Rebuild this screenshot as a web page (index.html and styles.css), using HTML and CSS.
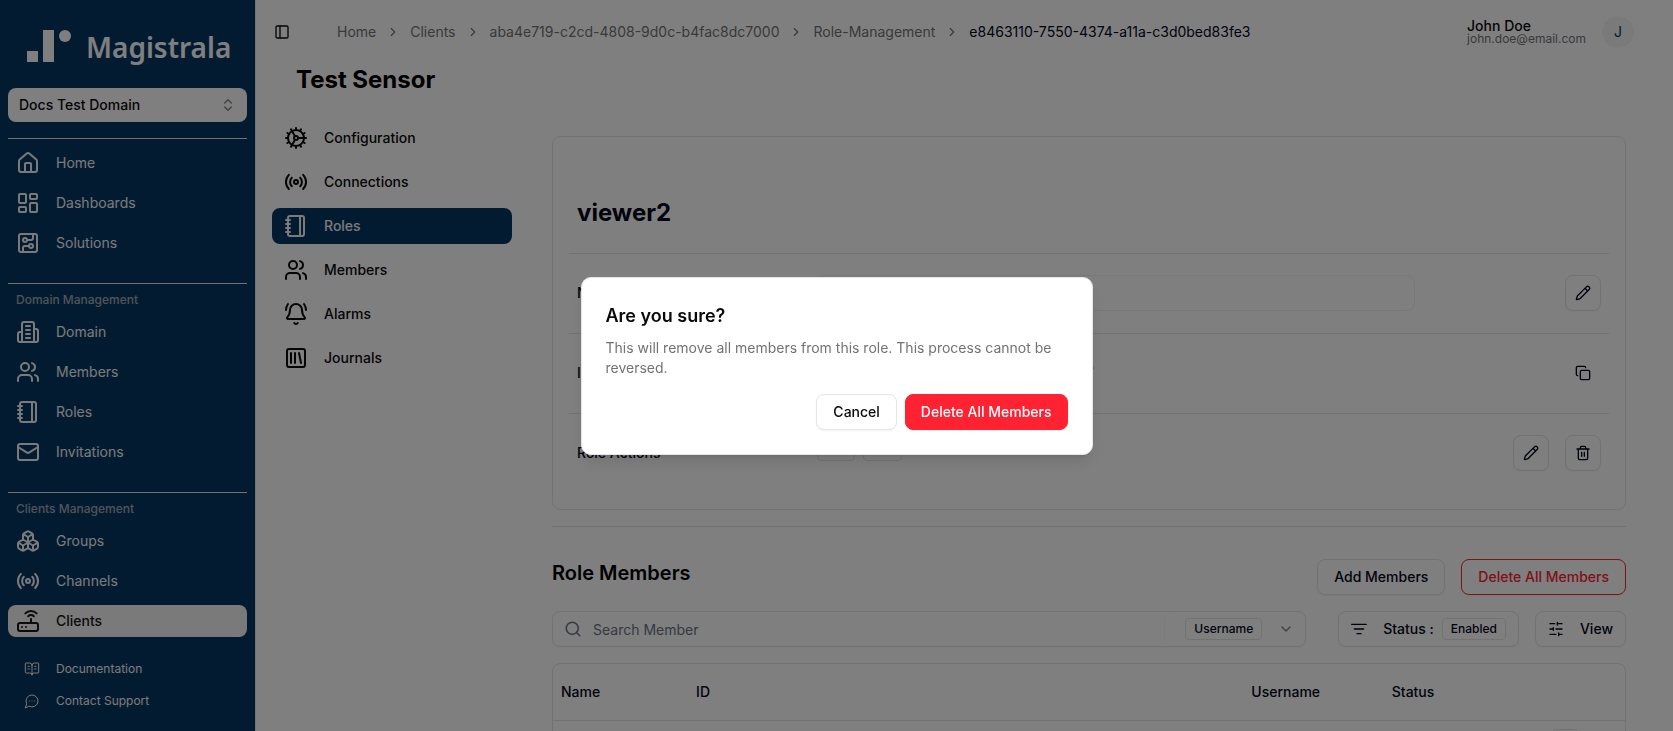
FILE: index.html
```html
<!DOCTYPE html>
<html lang="en">
<head>
    <meta charset="UTF-8">
    <meta name="viewport" content="width=device-width, initial-scale=1.0">
    <title>Role Management</title>
    <link rel="stylesheet" href="styles.css">
</head>
<body>
    <!-- shared icons -->
    <svg class="sprite" aria-hidden="true">
        <symbol id="users" viewBox="0 0 24 24"><path d="M16 21v-2a4 4 0 0 0-4-4H6a4 4 0 0 0-4 4v2"/><circle cx="9" cy="7" r="4"/><path d="M22 21v-2a4 4 0 0 0-3-3.87M16 3.13a4 4 0 0 1 0 7.75"/></symbol>
        <symbol id="notebook" viewBox="0 0 24 24"><path d="M2 6h4M2 10h4M2 14h4M2 18h4"/><rect width="16" height="20" x="4" y="2" rx="2"/><path d="M16 2v20"/></symbol>
        <symbol id="radio" viewBox="0 0 24 24"><path d="M4.9 19.1C1 15.2 1 8.8 4.9 4.9M7.8 16.2c-2.3-2.3-2.3-6.1 0-8.5"/><circle cx="12" cy="12" r="2"/><path d="M16.2 7.8c2.3 2.3 2.3 6.1 0 8.5M19.1 4.9C23 8.8 23 15.1 19.1 19"/></symbol>
        <symbol id="chevron" viewBox="0 0 24 24"><path d="m9 18 6-6-6-6"/></symbol>
        <symbol id="pencil" viewBox="0 0 24 24"><path d="M21.17 6.81a1 1 0 0 0-3.98-3.98L3.84 16.17a2 2 0 0 0-.5.83l-1.32 4.35a.5.5 0 0 0 .62.62l4.35-1.32a2 2 0 0 0 .83-.5zM15 5l4 4"/></symbol>
    </svg>

    <div class="layout">
        <aside class="sidebar">
            <a href="#" class="logo" aria-label="Magistrala">
                <svg class="logo-mark" viewBox="0 0 44 32"><path d="M0 21h11v11H0zM16 0h11v32H16z"/><circle cx="38" cy="6" r="6"/></svg>
                <span>Magistrala</span>
            </a>
            <button type="button" class="domain-switch">
                Docs Test Domain
                <svg class="icon small" viewBox="0 0 24 24"><path d="m7 15 5 5 5-5M7 9l5-5 5 5"/></svg>
            </button>
            <nav class="side-group">
                <a href="#"><svg class="icon" viewBox="0 0 24 24"><path d="M15 21v-8a1 1 0 0 0-1-1h-4a1 1 0 0 0-1 1v8"/><path d="M3 10a2 2 0 0 1 .71-1.53l7-6a2 2 0 0 1 2.58 0l7 6A2 2 0 0 1 21 10v9a2 2 0 0 1-2 2H5a2 2 0 0 1-2-2z"/></svg>Home</a>
                <a href="#"><svg class="icon" viewBox="0 0 24 24"><rect width="7" height="9" x="3" y="3" rx="1"/><rect width="7" height="5" x="14" y="3" rx="1"/><rect width="7" height="9" x="14" y="12" rx="1"/><rect width="7" height="5" x="3" y="16" rx="1"/></svg>Dashboards</a>
                <a href="#"><svg class="icon" viewBox="0 0 24 24"><rect width="18" height="18" x="3" y="3" rx="2"/><path d="M11 9h4a2 2 0 0 0 2-2V3"/><circle cx="9" cy="9" r="2"/><path d="M7 21v-4a2 2 0 0 1 2-2h4"/><circle cx="15" cy="15" r="2"/></svg>Solutions</a>
            </nav>
            <nav class="side-group">
                <h2>Domain Management</h2>
                <a href="#"><svg class="icon" viewBox="0 0 24 24"><path d="M6 22V4a2 2 0 0 1 2-2h8a2 2 0 0 1 2 2v18zM6 12H4a2 2 0 0 0-2 2v6a2 2 0 0 0 2 2h2M18 9h2a2 2 0 0 1 2 2v9a2 2 0 0 1-2 2h-2M10 6h4M10 10h4M10 14h4M10 18h4"/></svg>Domain</a>
                <a href="#"><svg class="icon"><use href="#users"/></svg>Members</a>
                <a href="#"><svg class="icon"><use href="#notebook"/></svg>Roles</a>
                <a href="#"><svg class="icon" viewBox="0 0 24 24"><rect width="20" height="16" x="2" y="4" rx="2"/><path d="m22 7-8.97 5.7a1.94 1.94 0 0 1-2.06 0L2 7"/></svg>Invitations</a>
            </nav>
            <nav class="side-group last">
                <h2>Clients Management</h2>
                <a href="#"><svg class="icon" viewBox="0 0 24 24"><path d="M2.97 12.92A2 2 0 0 0 2 14.63v3.24a2 2 0 0 0 .97 1.71l3 1.8a2 2 0 0 0 2.06 0L12 19v-5.5l-5-3zM7 16.5l-4.74-2.85M7 16.5l5-3M7 16.5v5.17M12 13.5V19l3.97 2.38a2 2 0 0 0 2.06 0l3-1.8a2 2 0 0 0 .97-1.71v-3.24a2 2 0 0 0-.97-1.71L17 10.5zM17 16.5l-5-3M17 16.5l4.74-2.85M17 16.5v5.17M7.97 4.42A2 2 0 0 0 7 6.13v4.37l5 3 5-3V6.13a2 2 0 0 0-.97-1.71l-3-1.8a2 2 0 0 0-2.06 0zM12 8 7.26 5.15M12 8l4.74-2.85M12 13.5V8"/></svg>Groups</a>
                <a href="#"><svg class="icon"><use href="#radio"/></svg>Channels</a>
                <a href="#" class="active" aria-current="page"><svg class="icon" viewBox="0 0 24 24"><rect width="20" height="8" x="2" y="14" rx="2"/><path d="M6.01 18H6M10.01 18H10M15 10v4M17.84 7.17a4 4 0 0 0-5.66 0M20.66 4.34a8 8 0 0 0-11.31 0"/></svg>Clients</a>
            </nav>
            <nav class="side-help">
                <a href="#"><svg class="icon small" viewBox="0 0 24 24"><path d="M12 7v14M16 12h2M16 8h2M6 12h2M6 8h2M3 18a1 1 0 0 1-1-1V4a1 1 0 0 1 1-1h5a4 4 0 0 1 4 4 4 4 0 0 1 4-4h5a1 1 0 0 1 1 1v13a1 1 0 0 1-1 1h-6a3 3 0 0 0-3 3 3 3 0 0 0-3-3z"/></svg>Documentation</a>
                <a href="#"><svg class="icon small" viewBox="0 0 24 24"><path d="M7.9 20A9 9 0 1 0 4 16.1L2 22ZM8 12h.01M12 12h.01M16 12h.01"/></svg>Contact Support</a>
            </nav>
        </aside>

        <main class="main">
            <header class="topbar">
                <button type="button" class="toggle" aria-label="Toggle sidebar"><svg class="icon small" viewBox="0 0 24 24"><rect width="18" height="18" x="3" y="3" rx="2"/><path d="M9 3v18"/></svg></button>
                <nav class="breadcrumb" aria-label="Breadcrumb">
                    <a href="#">Home</a>
                    <svg class="icon tiny"><use href="#chevron"/></svg>
                    <a href="#">Clients</a>
                    <svg class="icon tiny"><use href="#chevron"/></svg>
                    <a href="#">aba4e719-c2cd-4808-9d0c-b4fac8dc7000</a>
                    <svg class="icon tiny"><use href="#chevron"/></svg>
                    <a href="#">Role-Management</a>
                    <svg class="icon tiny"><use href="#chevron"/></svg>
                    <span class="current">e8463110-7550-4374-a11a-c3d0bed83fe3</span>
                </nav>
                <div class="user">
                    <div class="user-text">
                        <strong>John Doe</strong>
                        <span>john.doe@email.com</span>
                    </div>
                    <button type="button" class="avatar">J</button>
                </div>
            </header>

            <h1>Test Sensor</h1>

            <div class="columns">
                <nav class="tabs">
                    <a href="#"><svg class="icon" viewBox="0 0 24 24"><path d="M12 20a8 8 0 1 0 0-16 8 8 0 0 0 0 16Z"/><path d="M12 14a2 2 0 1 0 0-4 2 2 0 0 0 0 4ZM12 2v2M12 22v-2M17 20.66l-1-1.73M11 10.27 7 3.34M20.66 17l-1.73-1M3.34 7l1.73 1M14 12h8M2 12h2M20.66 7l-1.73 1M3.34 17l1.73-1M17 3.34l-1 1.73M11 13.73l-4 6.93"/></svg>Configuration</a>
                    <a href="#"><svg class="icon"><use href="#radio"/></svg>Connections</a>
                    <a href="#" class="active" aria-current="page"><svg class="icon"><use href="#notebook"/></svg>Roles</a>
                    <a href="#"><svg class="icon"><use href="#users"/></svg>Members</a>
                    <a href="#"><svg class="icon" viewBox="0 0 24 24"><path d="M10.27 21a2 2 0 0 0 3.46 0M22 8c0-2.3-.8-4.3-2-6M3.26 15.33A1 1 0 0 0 4 17h16a1 1 0 0 0 .74-1.67C19.41 13.96 18 12.5 18 8A6 6 0 0 0 6 8c0 4.5-1.41 5.96-2.74 7.33M4 2C2.8 3.7 2 5.7 2 8"/></svg>Alarms</a>
                    <a href="#"><svg class="icon" viewBox="0 0 24 24"><rect width="18" height="18" x="3" y="3" rx="2"/><path d="M7 7v10M11 7v10M15 7l2 10"/></svg>Journals</a>
                </nav>

                <div class="content">
                    <section class="card">
                        <h2>viewer2</h2>
                        <div class="row">
                            <label for="roleName">Name</label>
                            <input type="text" id="roleName" value="viewer2" disabled>
                            <div class="row-actions">
                                <button type="button" class="btn square" aria-label="Edit name"><svg class="icon small"><use href="#pencil"/></svg></button>
                            </div>
                        </div>
                        <div class="row">
                            <span>ID</span>
                            <span class="role-id">e8463110-7550-4374-a11a-c3d0bed83fe3</span>
                            <div class="row-actions">
                                <button type="button" class="btn square ghost" aria-label="Copy ID"><svg class="icon small" viewBox="0 0 24 24"><rect width="14" height="14" x="8" y="8" rx="2"/><path d="M4 16c-1.1 0-2-.9-2-2V4c0-1.100.9-2 2-2h10c1.100 0 2 .9 2 2"/></svg></button>
                            </div>
                        </div>
                        <div class="row">
                            <span>Role Actions</span>
                            <div class="actions-list"><span class="tag">read</span><span class="tag">view</span></div>
                            <div class="row-actions">
                                <button type="button" class="btn square" aria-label="Edit actions"><svg class="icon small"><use href="#pencil"/></svg></button>
                                <button type="button" class="btn square" aria-label="Delete actions"><svg class="icon small" viewBox="0 0 24 24"><path d="M3 6h18M19 6v14c0 1-1 2-2 2H7c-1 0-2-1-2-2V6M8 6V4c0-1 1-2 2-2h4c1 0 2 1 2 2v2M10 11v6M14 11v6"/></svg></button>
                            </div>
                        </div>
                    </section>

                    <section class="members">
                        <div class="members-head">
                            <h2>Role Members</h2>
                            <button type="button" class="btn">Add Members</button>
                            <button type="button" class="btn danger-outline">Delete All Members</button>
                        </div>
                        <div class="filters">
                            <div class="search">
                                <svg class="icon search-icon" viewBox="0 0 24 24"><circle cx="11" cy="11" r="8"/><path d="m21 21-4.3-4.3"/></svg>
                                <input type="search" placeholder="Search Member" aria-label="Search Member">
                                <button type="button" class="search-by"><span class="tag">Username</span><svg class="icon small" viewBox="0 0 24 24"><path d="m6 9 6 6 6-6"/></svg></button>
                            </div>
                            <button type="button" class="btn status"><svg class="icon small" viewBox="0 0 24 24"><path d="M1 5h22M5 12h14M9 19h6"/></svg><span>Status :</span><span class="tag">Enabled</span></button>
                            <button type="button" class="btn view"><svg class="icon small" viewBox="0 0 24 24"><path d="M21 4h-7M10 4H3M21 12h-9M8 12H3M21 20h-5M12 20H3M14 2v4M8 10v4M16 18v4"/></svg>View</button>
                        </div>
                        <div class="table-box">
                            <table>
                                <thead>
                                    <tr><th class="col-name">Name</th><th class="col-id">ID</th><th class="col-user">Username</th><th class="col-status">Status</th><th></th></tr>
                                </thead>
                                <tbody>
                                    <tr><td></td><td></td><td></td><td></td><td class="cell-menu"><button type="button" class="row-menu" aria-label="Row menu"></button></td></tr>
                                </tbody>
                            </table>
                        </div>
                    </section>
                </div>
            </div>
        </main>
    </div>

    <div class="overlay">
        <div class="dialog" role="alertdialog" aria-labelledby="dialogTitle" aria-describedby="dialogText">
            <h2 id="dialogTitle">Are you sure?</h2>
            <p id="dialogText">This will remove all members from this role. This process cannot be reversed.</p>
            <div class="dialog-buttons">
                <button type="button" class="btn">Cancel</button>
                <button type="button" class="btn danger">Delete All Members</button>
            </div>
        </div>
    </div>
</body>
</html>
```
FILE: styles.css
```css
* {
    box-sizing: border-box;
}
body {
    margin: 0;
    height: 100vh;
    overflow: hidden;
    font-family: Inter, sans-serif;
    font-size: 14px;
    line-height: 20px;
    color: #0a0a0a;
    background: #fff;
}
h1, h2, p {
    margin: 0;
}
a {
    color: inherit;
    text-decoration: none;
}
button, input {
    font: inherit;
    color: inherit;
}
button {
    cursor: pointer;
}
.sprite {
    display: none;
}
.icon {
    width: 24px;
    height: 24px;
    flex: none;
    fill: none;
    stroke: currentColor;
    stroke-width: 2;
    stroke-linecap: round;
    stroke-linejoin: round;
}
.icon.small {
    width: 16px;
    height: 16px;
}
.icon.tiny {
    width: 14px;
    height: 14px;
}
.layout {
    display: flex;
    height: 100vh;
    overflow: hidden;
}

/* sidebar */
.sidebar {
    width: 256px;
    flex: none;
    padding: 0 8px;
    background: #073763;
    border-right: 1px solid #e5e5e5;
    color: #f5f5f5;
}
.logo {
    display: flex;
    gap: 15px;
    height: 88px;
    padding: 30px 0 0 19px;
    color: #fff;
    font-family: "Noto Sans", sans-serif;
    font-size: 28px;
    font-weight: 600;
    line-height: 34px;
}
.logo-mark {
    width: 44px;
    height: 32px;
    fill: currentColor;
}
.domain-switch {
    display: flex;
    align-items: center;
    justify-content: space-between;
    width: 100%;
    height: 34px;
    margin-bottom: 16px;
    padding: 0 11px;
    border: none;
    border-radius: 8px;
    background: #fff;
    color: #0a0a0a;
    font-weight: 500;
}
.domain-switch .icon {
    opacity: 0.5;
}
.side-group {
    display: flex;
    flex-direction: column;
    gap: 8px;
    padding: 8px 0 24px;
    border-top: 1px solid #e5e5e5;
}
.side-group.last {
    padding-bottom: 16px;
}
.side-group h2 {
    padding-left: 8px;
    font-size: 12px;
    font-weight: 500;
    line-height: 16px;
    color: #a1a9b4;
}
.side-group a {
    display: flex;
    align-items: center;
    gap: 16px;
    height: 32px;
    padding: 0 8px;
    border-radius: 8px;
}
.side-group .active {
    background: #f5f5f5;
    color: #171717;
    font-weight: 500;
}
.side-help a {
    display: flex;
    align-items: center;
    gap: 16px;
    height: 32px;
    padding-left: 16px;
    font-size: 12px;
}
.side-help .icon {
    stroke-width: 1.5;
}

/* header */
.main {
    flex: 1;
    min-width: 0;
}
.topbar {
    display: flex;
    align-items: center;
    height: 64px;
    padding: 0 39px 0 18px;
}
.toggle {
    display: flex;
    padding: 0;
    border: none;
    background: none;
}
.breadcrumb {
    display: flex;
    flex: 1;
    align-items: center;
    gap: 10px;
    padding-left: 47px;
    color: #737373;
}
.breadcrumb .current {
    color: #020618;
}
.user {
    display: flex;
    align-items: center;
    gap: 16px;
}
.user-text {
    display: flex;
    flex-direction: column;
    line-height: 14px;
}
.user-text strong {
    font-weight: 500;
}
.user-text span {
    font-size: 12px;
    line-height: 12px;
    color: #737373;
}
.avatar {
    width: 32px;
    height: 32px;
    padding: 0;
    border: none;
    border-radius: 50%;
    background: #f5f5f5;
    color: #073763;
}
h1 {
    padding-left: 40px;
    font-size: 24px;
    font-weight: 700;
    line-height: 32px;
    color: #000;
}

/* page body */
.columns {
    display: flex;
    align-items: flex-start;
    gap: 40px;
    padding: 24px 47px 0 16px;
}
.tabs {
    display: flex;
    flex-direction: column;
    gap: 8px;
    width: 240px;
    flex: none;
}
.tabs a {
    display: flex;
    align-items: center;
    gap: 16px;
    height: 36px;
    padding: 0 12px;
    border-radius: 8px;
    font-weight: 500;
}
.tabs .active {
    background: #073763;
    color: #f5f5f5;
}
.content {
    flex: 1;
    min-width: 0;
    padding-top: 16px;
    color: #020618;
}
.card {
    padding: 60px 16px 16px;
    border: 1px solid #e5e5e5;
    border-radius: 8px;
}
.card h2 {
    padding: 0 8px 24px;
    font-size: 24px;
    line-height: 32px;
}
.row {
    display: grid;
    grid-template-columns: 240px 1fr 186px;
    align-items: center;
    height: 80px;
    padding: 0 8px 1px;
    border-top: 1px solid #e5e5e5;
    font-weight: 500;
}
.row input {
    height: 36px;
    padding: 0 12px;
    border: 1px solid #f0f0f0;
    border-radius: 8px;
    background: none;
    color: #737373;
}
.row-actions {
    display: flex;
    justify-content: flex-end;
    gap: 16px;
}
.role-id {
    padding: 0 0 14px 12px;
    font-size: 13px;
    color: #1d5fa8;
}
.actions-list {
    display: flex;
    gap: 8px;
    padding-bottom: 6px;
}
.actions-list .tag {
    padding: 0 5px;
}
.btn {
    display: flex;
    align-items: center;
    justify-content: center;
    height: 36px;
    padding: 0 16px;
    border: 1px solid #e5e5e5;
    border-radius: 8px;
    background: #fff;
    box-shadow: 0 1px 2px rgba(0, 0, 0, 0.05);
    font-weight: 500;
}
.btn.square {
    width: 36px;
    padding: 0;
}
.btn.ghost {
    border-color: transparent;
    box-shadow: none;
}
.btn.danger {
    border-color: #ff2233;
    background: #ff2233;
    color: #fff;
    padding: 0 15px;
}
.btn.danger-outline {
    border-color: #ff2233;
    color: #ff2233;
}
.tag {
    padding: 0 8px;
    border: 1px solid #e5e5e5;
    border-radius: 4px;
    font-size: 12px;
    font-weight: 500;
}

/* members */
.members {
    margin-top: 16px;
    border-top: 1px solid #e5e5e5;
}
.members-head {
    display: flex;
    gap: 16px;
    padding-top: 32px;
}
.members-head h2 {
    flex: 1;
    font-size: 20px;
    font-weight: 600;
    line-height: 28px;
    color: #000;
}
.filters {
    display: flex;
    gap: 16px;
    padding: 16px 0;
}
.search {
    display: flex;
    flex: 1;
    align-items: center;
    height: 36px;
    margin-right: 16px;
    padding-left: 11px;
    border: 1px solid #e5e5e5;
    border-radius: 8px;
    box-shadow: 0 1px 2px rgba(0, 0, 0, 0.05);
}
.search-icon {
    width: 18px;
    height: 18px;
    color: #6a7282;
}
.search input {
    flex: 1;
    min-width: 0;
    padding: 1px 11px 0;
    border: none;
    background: none;
}
.search input::placeholder {
    color: #6a7282;
    opacity: 1;
}
.search-by {
    display: flex;
    align-items: center;
    gap: 16px;
    height: 34px;
    padding: 0 11px 0 20px;
    border: none;
    border-left: 1px solid #f5f5f5;
    border-radius: 8px;
    background: none;
}
.search-by .icon {
    opacity: 0.5;
}
.btn.status {
    padding: 0 12px;
}
.status .icon {
    margin-right: 16px;
}
.status .tag {
    margin-left: 8px;
}
.btn.view {
    gap: 16px;
    padding: 0 12px;
}
.table-box {
    border: 1px solid #e5e5e5;
    border-radius: 8px;
}
table {
    width: 100%;
    border-collapse: collapse;
    table-layout: fixed;
}
th {
    height: 56px;
    padding: 0 8px;
    text-align: left;
    font-weight: 500;
}
td {
    height: 56px;
    padding: 8px;
    border-top: 1px solid #e5e5e5;
    vertical-align: top;
}
.col-name {
    width: 12.6%;
}
.col-id {
    width: 51.8%;
}
.col-user {
    width: 13.1%;
}
.col-status {
    width: 14.1%;
}
.cell-menu {
    padding-left: 14px;
}
.row-menu {
    width: 32px;
    height: 32px;
    border: 1px solid #e5e5e5;
    border-radius: 8px;
    background: #fff;
}

/* dialog */
.overlay {
    position: fixed;
    inset: 0;
    display: flex;
    align-items: center;
    justify-content: center;
    background: rgba(0, 0, 0, 0.5);
}
.dialog {
    width: 512px;
    padding: 24px;
    border: 1px solid #e5e5e5;
    border-radius: 10px;
    background: #fff;
    box-shadow: 0 10px 15px -3px rgba(0, 0, 0, 0.1), 0 4px 6px -4px rgba(0, 0, 0, 0.1);
}
.dialog h2 {
    font-size: 18px;
    font-weight: 600;
    line-height: 28px;
}
.dialog p {
    margin: 8px 0 16px;
    color: #737373;
}
.dialog-buttons {
    display: flex;
    justify-content: flex-end;
    gap: 8px;
}
```
